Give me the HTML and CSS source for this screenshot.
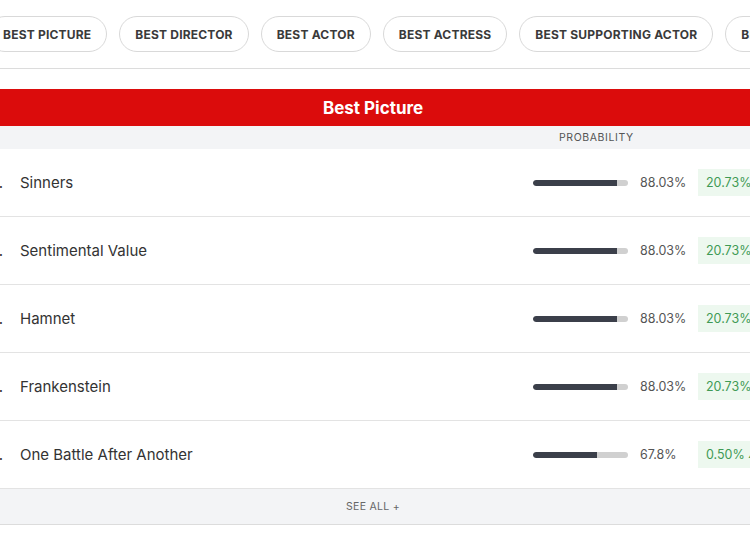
FILE: index.html
```html
<!DOCTYPE html>
<html>
<head>
<meta charset="utf-8">
<link rel="stylesheet" href="styles.css">
</head>
<body>
<div class="page">
  <nav class="pills">
    <span class="pill">BEST PICTURE</span>
    <span class="pill">BEST DIRECTOR</span>
    <span class="pill">BEST ACTOR</span>
    <span class="pill">BEST ACTRESS</span>
    <span class="pill">BEST SUPPORTING ACTOR</span>
    <span class="pill">BEST SUPPORTING ACTRESS</span>
  </nav>
  <div class="rule"></div>
  <section class="table">
    <h2 class="title">Best Picture</h2>
    <div class="subhead"><span class="prob">PROBABILITY</span></div>
    <div class="row">
      <span class="rank">1.</span><span class="name">Sinners</span>
      <span class="bar"><span class="fill" style="width:88.03%"></span></span>
      <span class="pct">88.03%</span><span class="badge">20.73%</span>
    </div>
    <div class="row">
      <span class="rank">2.</span><span class="name">Sentimental Value</span>
      <span class="bar"><span class="fill" style="width:88.03%"></span></span>
      <span class="pct">88.03%</span><span class="badge">20.73%</span>
    </div>
    <div class="row">
      <span class="rank">3.</span><span class="name">Hamnet</span>
      <span class="bar"><span class="fill" style="width:88.03%"></span></span>
      <span class="pct">88.03%</span><span class="badge">20.73%</span>
    </div>
    <div class="row">
      <span class="rank">4.</span><span class="name">Frankenstein</span>
      <span class="bar"><span class="fill" style="width:88.03%"></span></span>
      <span class="pct">88.03%</span><span class="badge">20.73%</span>
    </div>
    <div class="row">
      <span class="rank">5.</span><span class="name">One Battle After Another</span>
      <span class="bar"><span class="fill" style="width:67.8%"></span></span>
      <span class="pct">67.8%</span><span class="badge">0.50% <span class="up">▲</span></span>
    </div>
    <div class="seeall">SEE ALL +</div>
  </section>
</div>
</body>
</html>
```
FILE: styles.css
```css
html, body {
  margin: 0;
  padding: 0;
  background: #fff;
  overflow: hidden;
}
body {
  width: 750px;
  height: 536px;
  font-family: "Inter", "Liberation Sans", sans-serif;
  color: #333;
}
.page {
  margin-left: -22px;
  width: 790px;
}
.pills {
  display: flex;
  gap: 12px;
  padding: 16px 0 0 9px;
  white-space: nowrap;
  height: 36px;
}
.pill {
  flex: none;
  display: flex;
  align-items: center;
  height: 34px;
  padding: 0 15px;
  border: 1px solid #d9d9d9;
  border-radius: 18px;
  font-size: 12px;
  font-weight: 700;
  letter-spacing: 0.2px;
  color: #3a3a3a;
}
.rule {
  margin-top: 16px;
  border-top: 1px solid #dcdcdc;
}
.table {
  margin-top: 20px;
}
.title {
  margin: 0;
  height: 37px;
  line-height: 38px;
  background: #db0c0c;
  color: #fff;
  text-align: center;
  font-size: 17px;
  font-weight: 700;
}
.subhead {
  height: 23px;
  background: #f3f4f6;
  display: grid;
  grid-template-columns: 14px 1fr 95px 46px 62px;
  column-gap: 12px;
  padding: 0 8px 0 16px;
  align-items: center;
}
.prob {
  grid-column: 3 / 5;
  margin-left: 26px;
  font-size: 10.5px;
  letter-spacing: 0.6px;
  color: #555;
}
.row {
  display: grid;
  grid-template-columns: 14px 1fr 95px 46px 62px;
  column-gap: 12px;
  padding: 0 8px 0 16px;
  height: 67px;
  align-items: center;
  border-bottom: 1px solid #e3e3e3;
}
.rank, .name {
  font-size: 15px;
  color: #333;
}
.rank {
  justify-self: end;
  margin-right: 5px;
}
.bar {
  height: 6px;
  border-radius: 3px;
  background: #d0d0d0;
  overflow: hidden;
}
.fill {
  display: block;
  height: 100%;
  background: #3b3f4a;
  border-radius: 3px 0 0 3px;
}
.pct {
  font-size: 12.5px;
  color: #555;
}
.badge {
  justify-self: start;
  background: #edf8ef;
  color: #3f9a55;
  font-size: 12.5px;
  padding: 6px 8px;
  white-space: nowrap;
}
.up {
  font-size: 8px;
  vertical-align: 1px;
}
.seeall {
  height: 35px;
  line-height: 35px;
  background: #f3f4f6;
  border-bottom: 1px solid #dcdcdc;
  text-align: center;
  font-size: 10.5px;
  color: #666;
  letter-spacing: 0.3px;
}
```
